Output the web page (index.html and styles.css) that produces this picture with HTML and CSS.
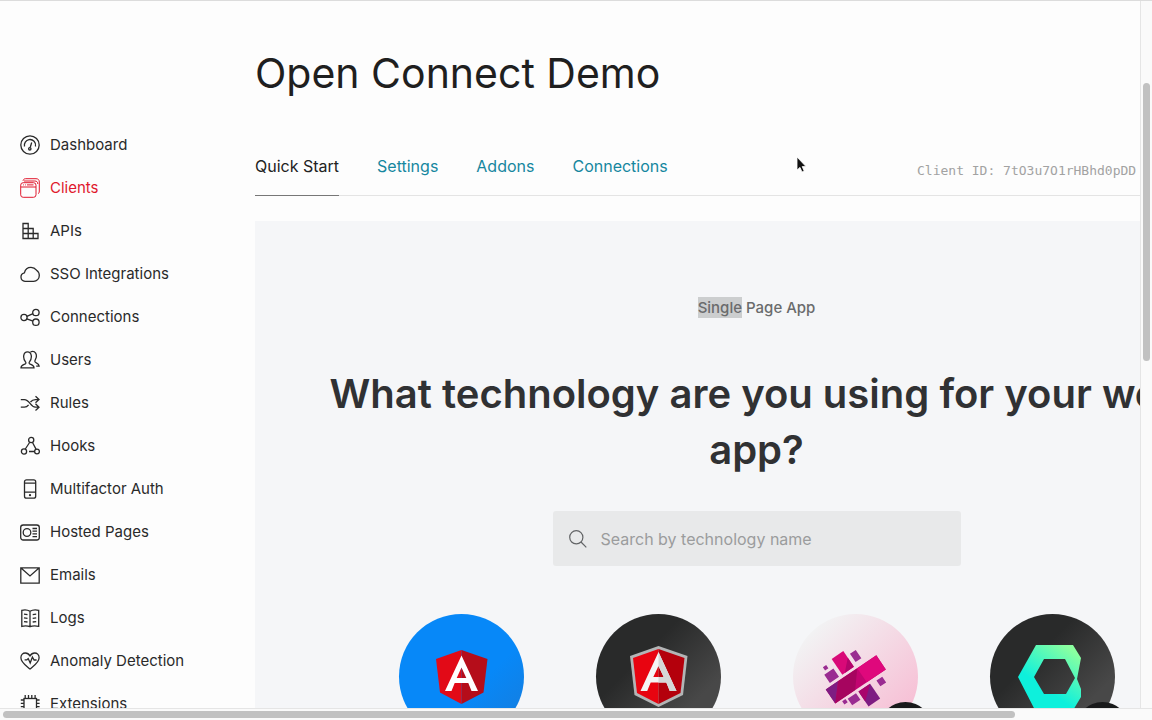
FILE: index.html
```html
<!DOCTYPE html>
<html lang="en">
<head>
<meta charset="utf-8">
<title>Open Connect Demo</title>
<link rel="stylesheet" href="styles.css">
</head>
<body>
<div class="window">
  <div class="viewport">
    <div class="page">
      <nav class="sidebar" aria-label="Main">
        <a class="nav-item" href="#"><svg class="icon" viewBox="0 0 20 20"><circle cx="10" cy="10" r="9.2"/><path d="M4.500 11.500A5.700 5.700 0 0 1 9 4.600a5.700 5.700 0 0 1 6.500 6.900M11.700 7.500l-1.500 5"/><circle cx="9.800" cy="13.800" r="1.200"/></svg>Dashboard</a>
        <a class="nav-item active" href="#"><svg class="icon fine" viewBox="0 0 20 20"><rect x=".7" y="4.700" width="15.300" height="14.600" rx="2.500"/><path d="M1 9h15M3 6.900h.8M5 6.900h.8M7 6.900h6.500M3 2.800C3.500 1.300 4.200.7 5.500.7H16c2.200 0 3.300 1.200 3.300 3.300v9c0 1.500-.4 2.300-1.300 2.700M4 3h10.800c2 0 3 1 3 3"/></svg>Clients</a>
        <a class="nav-item" href="#"><svg class="icon" viewBox="0 0 20 20"><path d="M3 2.500h5.200v15H3zM3 7.500h10.200v10M3 12.500h15v5H3M8.200 7.500v10"/></svg>APIs</a>
        <a class="nav-item" href="#"><svg class="icon" viewBox="0 0 20 20"><path d="M5 17.300a4.300 4.300 0 0 1-.6-8.500C5.200 5.400 8 3.400 11 3.400c2.500 0 4.200 1.100 5.500 2.800 1.700 1.100 2.800 3.100 2.800 5.300 0 3.300-2.500 5.800-5.700 5.800z"/></svg>SSO Integrations</a>
        <a class="nav-item" href="#"><svg class="icon" viewBox="0 0 20 20"><circle cx="4" cy="10.500" r="3.100"/><circle cx="15.900" cy="5.500" r="3.200"/><circle cx="15.900" cy="15.200" r="3.200"/><path d="M6.900 9.300 13 6.700M6.800 11.800l6.300 2.300"/></svg>Connections</a>
        <a class="nav-item" href="#"><svg class="icon" viewBox="0 0 20 20"><path d="M1 17.800c0-3 2.500-3.100 4.300-3.900.8-.4.700-1.300.2-2C2.400 7.800 3.300 1.900 7.500 1.900s5.100 5.900 2 10c-.5.700-.6 1.600.2 2 1.800.8 4.300.9 4.300 3.900zM10.500 1.900c4.700-1.900 7.300 2.900 5 7.300-.5 1-.9 2-.4 2.800.6 1 3.900 1 4.100 4.200h-3"/></svg>Users</a>
        <a class="nav-item" href="#"><svg class="icon" viewBox="0 0 20 20"><path d="M.8 6.600h3.600c5.300 0 5.900 7.600 11 7.600H19M.8 14.200h3.600c2 0 3.200-1 4.200-2.300M10.500 9c1.100-1.400 2.600-2.400 4.900-2.400H19M15.500 3.200 19 6.600l-3.500 3.100M15.500 10.800l3.500 3.400-3.500 3.200"/></svg>Rules</a>
        <a class="nav-item" href="#"><svg class="icon" viewBox="0 0 20 20"><circle cx="11.200" cy="4" r="2.600"/><circle cx="4" cy="15.500" r="2.600"/><circle cx="17" cy="15.500" r="2.400"/><path d="M9.600 6.500 5.300 13M12.500 6.500l3.500 6.600M9 15.500h5.500"/></svg>Hooks</a>
        <a class="nav-item" href="#"><svg class="icon" viewBox="0 0 20 20"><rect x="4.500" y=".8" width="11.200" height="18.400" rx="2"/><path d="M4.500 4.200h11.200M4.500 13.200h11.200"/><circle cx="10" cy="16.200" r=".5"/></svg>Multifactor Auth</a>
        <a class="nav-item" href="#"><svg class="icon" viewBox="0 0 20 20"><rect x=".7" y="3" width="18.600" height="15" rx="2.500"/><circle cx="7" cy="10.500" r="3.800"/><path d="M12.500 6.500H17M12.500 9.200H17M12.500 11.900H17M12.500 14.600H17"/></svg>Hosted Pages</a>
        <a class="nav-item" href="#"><svg class="icon" viewBox="0 0 20 20"><path d="M.8 2.800h18.400v15.400H.8zM1 3l9 8 9-8"/></svg>Emails</a>
        <a class="nav-item" href="#"><svg class="icon" viewBox="0 0 20 20"><path d="M10 3.300C7.500 1.700 4 1.700 1.800 2.300v16c2.700-.7 5.700-.7 8.200.4 2.500-1.100 5.600-1.100 8.700-.4v-16c-2.700-.6-6.200-.6-8.700 1zM10 3.300v15.400M4 6.200l3.500.4M4 9.900l3.500.4M4 13.600l3.500.4M12.700 6.600l3.500-.4M12.700 10.300l3.500-.4M12.700 14l3.500-.4"/></svg>Logs</a>
        <a class="nav-item" href="#"><svg class="icon" viewBox="0 0 20 20"><path d="M10 18C6.500 15 .9 11.500.9 6.700.9 3.900 3 2 5.400 2 7.500 2 9 3.300 10 4.900 11 3.300 12.500 2 14.600 2c2.400 0 4.500 1.900 4.500 4.700C19.100 11.500 13.500 15 10 18zM4.600 8.900h2.200l1.400-1.300 2 4.400 2.200-6 1.700 3h2.500"/></svg>Anomaly Detection</a>
        <a class="nav-item" href="#"><svg class="icon" viewBox="0 0 20 20"><rect x="4" y="4.500" width="12.500" height="12.500"/><path d="M5.200 4V1M8.500 4V1M11.800 4V1M15.100 4V1M5.200 20v-3M8.500 20v-3M11.800 20v-3M15.100 20v-3M4 6H.8M4 9.300H.8M4 12.600H.8M4 15.600H.8M19.600 6h-3M19.600 9.300h-3M19.600 12.600h-3M19.600 15.600h-3"/></svg>Extensions</a>
      </nav>
      <main class="main">
        <h1 class="title">Open Connect Demo</h1>
        <div class="tab-bar">
          <nav class="tabs" aria-label="Client">
            <a class="tab current" href="#">Quick Start</a>
            <a class="tab" href="#">Settings</a>
            <a class="tab" href="#">Addons</a>
            <a class="tab" href="#">Connections</a>
          </nav>
          <div class="client-id">Client ID: 7tO3u7O1rHBhd0pDD</div>
        </div>
        <section class="panel">
          <p class="kind"><mark class="selected">Single</mark> Page App</p>
          <h2 class="question">What technology are you using for your web app?</h2>
          <label class="search">
            <svg class="search-icon" viewBox="0 0 18 18"><circle cx="7.300" cy="7.300" r="6.600"/><path d="m12 12 5.300 5.300"/></svg>
            <input class="search-input" type="search" aria-label="Search by technology name" placeholder="Search by technology name">
          </label>
          <div class="technologies">
            <a class="tech blue" href="#" aria-label="Angular">
              <svg viewBox="0 0 125 125"><path fill="#e20a17" d="M62.500 36 37 45l4 33.500 21.500 11.500z"/><path fill="#b50d1a" d="m62.500 36 26 9-4 33.500-22 11.500z"/><path fill="#fff" fill-rule="evenodd" d="M62.500 41.500 79 77h-6.500l-3.200-8H55.700l-3.200 8H46zm0 12L57.700 64h9.600z"/></svg>
            </a>
            <a class="tech dark" href="#" aria-label="AngularJS">
              <svg viewBox="0 0 125 125"><path fill="#b3b5b6" d="m62.500 32 29 10-4.500 39-24.500 12L38.500 81 34 42z"/><path fill="#e80410" d="M62.500 35 37 44l4 35 21.500 11z"/><path fill="#b4000c" d="m62.500 35 26 9-4 35-22 11z"/><path fill="#f5f5f5" fill-rule="evenodd" d="M62.500 38 80.500 77h-6.700l-3.500-8.500H54.700L51.200 77h-6.700zm0 14L57.300 63h10.400z"/><path fill="#d5d7d7" d="m62.500 38 18 39h-6.700l-3.500-8.500h-7.800V63h5.200l-5.200-11z"/></svg>
            </a>
            <a class="tech pink" href="#" aria-label="Aurelia">
              <svg viewBox="0 0 125 125"><g transform="rotate(-34 62.500 65)"><path fill="#c20570" d="M32 57h61v17H32z"/><path fill="#df087c" d="M70 57h23v17H70z"/><path fill="#7e1d82" d="M32 74V57h15z"/><path fill="#a6055f" d="M47 57h23L56 74H32z"/><path fill="#d90978" d="M54 35h14v19H54z"/><path fill="#b3056b" d="m68 43v11H57z"/><path fill="#7e1d82" d="M58 77h14v18H58z"/><path fill="#a9056c" d="M58 77h14L58 89z"/><path fill="#9a2c91" d="M39 44h11v10H39zM72 41h7v10h-7zM42 37h4v4h-4zM79 78h7v7h-7zM45 77h10v8H45zM39 76h4v4h-4z"/></g></svg>
              <span class="badge"></span>
            </a>
            <a class="tech dark" href="#" aria-label="Auth0 technology">
              <svg viewBox="0 0 125 125"><defs><linearGradient id="mint" x1=".75" y1="0" x2=".35" y2=".6"><stop offset="0" stop-color="#8bffa0"/><stop offset="1" stop-color="#0ef0dc"/></linearGradient></defs><path fill="url(#mint)" fill-rule="evenodd" d="M46 31h37l8 13-4 21 4 10v8L82 98H46L28 63zm8 14L44 63l10 17h22l9-16-10-19z"/></svg>
              <span class="badge"></span>
            </a>
          </div>
        </section>
      </main>
    </div>
    <svg class="cursor" viewBox="0 0 12 18"><path d="M1 1v13l3-2.600 2 4.600 2.200-1-2-4.400H10z"/></svg>
  </div>
  <div class="scroll-y"><div class="thumb-y"></div></div>
  <div class="scroll-x"><div class="thumb-x"></div></div>
</div>
</body>
</html>
```
FILE: styles.css
```css
* { box-sizing: border-box; }
body { margin: 0; font-family: Inter, "Liberation Sans", sans-serif; color: #222; background: #fdfdfd; }
a { color: inherit; text-decoration: none; }

.window { display: grid; grid-template-columns: 1fr 12px; grid-template-rows: 1fr 12px; height: 100vh; overflow: hidden; border-top: 1px solid #dcdcdc; }
.viewport { position: relative; overflow: hidden; min-width: 0; min-height: 0; }
.page { display: flex; min-width: 1284px; }

.sidebar { flex: 0 0 255px; display: flex; flex-direction: column; padding: 122px 0 0 20px; }
.nav-item { display: flex; align-items: center; gap: 10px; height: 43px; font-size: 15px; color: #2a2a2a; }
.nav-item.active { color: #e0182d; }
.icon { width: 20px; height: 20px; fill: none; stroke: currentColor; stroke-width: 1.3; }
.icon.fine { stroke-width: 1; }

.main { flex: 1; min-width: 0; padding: 46px 26px 0 0; }
.title { margin: 0; font-size: 41px; line-height: 52px; font-weight: 400; color: #1f1f1f; }
.tab-bar { display: flex; justify-content: space-between; margin-top: 48px; height: 49px; border-bottom: 1px solid #e4e4e4; }
.tabs { display: flex; gap: 38px; }
.tab { height: 49px; padding-top: 7px; font-size: 16px; line-height: 24px; color: #16879f; }
.tab.current { color: #222; border-bottom: 1px solid #777; }
.client-id { flex: 0 0 341px; padding-top: 12px; font: 13px/24px "DejaVu Sans Mono", monospace; color: #a2a2a2; white-space: nowrap; }

.panel { margin-top: 25px; padding: 75px 60px 60px; background: #f5f6f8; display: flex; flex-direction: column; align-items: center; }
.kind { margin: 0; font-size: 15px; line-height: 24px; font-weight: 500; color: #6a6b6c; }
.selected { background: #cccecf; color: inherit; padding: 1px 0; }
.question { margin: 46px 0 0; font-size: 40px; line-height: 56px; font-weight: 600; text-align: center; color: #303133; }
.search { display: flex; align-items: center; gap: 14px; width: 408px; height: 55px; margin-top: 33px; padding: 0 16px; border-radius: 3px; background: #e8e9ea; }
.search-icon { width: 18px; height: 18px; fill: none; stroke: #626466; stroke-width: 1.2; }
.search-input { flex: 1; min-width: 0; padding: 0; border: 0; outline: 0; background: none; font: 16px Inter, "Liberation Sans", sans-serif; color: #333; }
.search-input::placeholder { color: #9b9c9d; opacity: 1; }

.technologies { display: flex; gap: 72px; margin-top: 48px; }
.tech { position: relative; width: 125px; height: 125px; border-radius: 50%; }
.tech svg { display: block; width: 125px; height: 125px; }
.blue { background: linear-gradient(135deg, #0788f8 60%, #187bd9); }
.dark { background: linear-gradient(135deg, #292a2a 35%, #484848 75%); }
.pink { background: linear-gradient(135deg, #f2f2f3 15%, #f7bfd5 85%); }
.badge { position: absolute; right: -14px; bottom: -16px; width: 53px; height: 53px; border-radius: 50%; background: #191a1b; }

.scroll-y { padding: 82px 2px 0; border-left: 1px solid #e5e5e5; background: #fafafa; }
.thumb-y { height: 278px; border-radius: 4px; background: #c1c1c1; }
.scroll-x { grid-column: 1 / -1; padding: 2px 137px 2px 3px; border-top: 1px solid #e5e5e5; background: #fafafa; }
.thumb-x { height: 7px; border-radius: 4px; background: #c1c1c1; }
.cursor { position: absolute; left: 796px; top: 155px; width: 12px; height: 18px; fill: #111; stroke: #fff; stroke-width: .8; }
```
